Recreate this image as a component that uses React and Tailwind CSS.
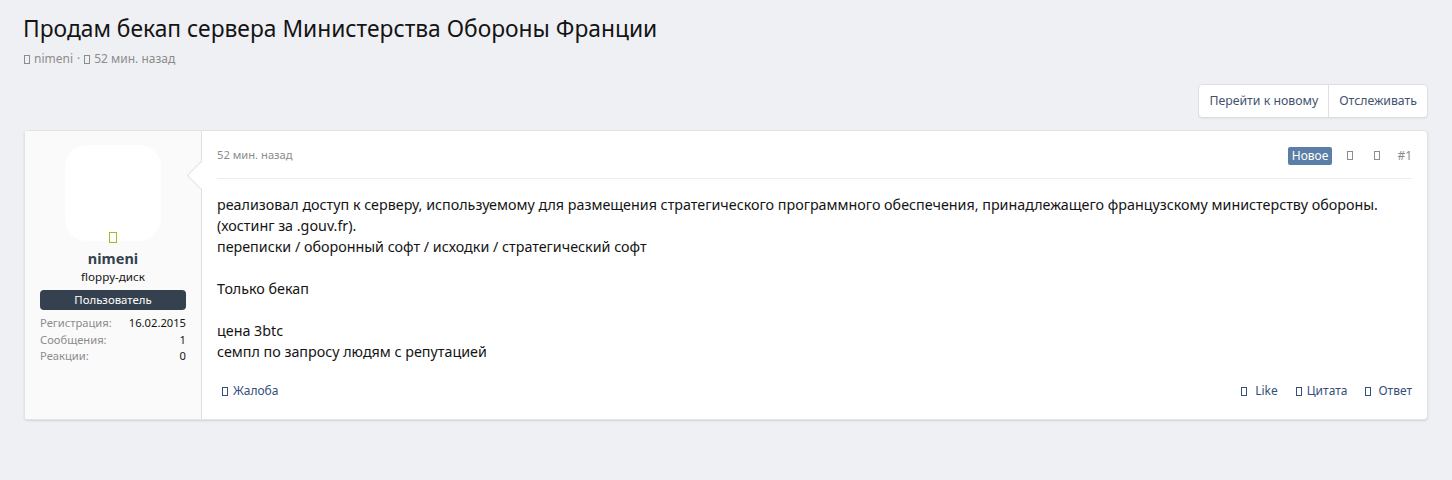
import React from 'react';

const Tofu = ({ className = '' }) => (
  <span className={`inline-block w-[6px] h-[9px] border border-current align-[-1px] ${className}`} />
);

const stats = [
  { label: 'Регистрация:', value: '16.02.2015' },
  { label: 'Сообщения:', value: '1' },
  { label: 'Реакции:', value: '0' },
];

const App = () => {
  return (
    <div className="min-h-[480px] bg-[#eff0f4] text-[#141414] font-['Noto_Sans',sans-serif] px-6 pt-[14px]">
      {/* Title */}
      <h1 className="text-[22.8px] leading-[30px] text-[#141414] -ml-[1px]">
        Продам бекап сервера Министерства Обороны Франции
      </h1>
      <div className="mt-[6px] text-[12px] text-[#8c8c8c] flex items-center gap-1">
        <Tofu /> <span>nimeni</span> <span>·</span> <Tofu /> <span>52 мин. назад</span>
      </div>

      {/* Buttons */}
      <div className="flex justify-end mt-[16px]">
        <div className="flex bg-white border border-[#dfdfdf] rounded-[4px] shadow-[0_1px_1px_rgba(0,0,0,0.05)] text-[12.3px] text-[#3f5370]">
          <button className="px-[10px] h-[32px] border-r border-[#dfdfdf]">Перейти к новому</button>
          <button className="px-[10px] h-[32px]">Отслеживать</button>
        </div>
      </div>

      {/* Post card */}
      <div className="mt-[12px] flex bg-white border border-[#e4e4e4] rounded-[4px] shadow-[0_1px_2px_rgba(0,0,0,0.12)]">
        {/* User panel */}
        <div className="relative w-[177px] shrink-0 bg-[#fafafa] border-r border-[#e0e0e0] px-[15px] pt-[14px] pb-4 flex flex-col items-center">
          <div className="w-[96px] h-[96px] rounded-[22px] bg-white" />
          <div className="-mt-[9px] h-[11px] flex text-[#9bbf20]">
            <Tofu className="w-[8px] h-[11px]" />
          </div>
          <div className="mt-[5px] text-[14.5px] font-bold text-[#36414f] leading-[20px]">nimeni</div>
          <div className="mt-[1px] text-[11.6px] text-[#141414] leading-4">floppy-диск</div>
          <div className="mt-[5px] w-full h-[20px] rounded-[4px] bg-[#36414f] text-white text-[11.4px] flex items-center justify-center">
            Пользователь
          </div>
          <div className="mt-[5px] w-full text-[11.2px] leading-[16.5px]">
            {stats.map((s) => (
              <div key={s.label} className="flex justify-between">
                <span className="text-[#8c8c8c]">{s.label}</span>
                <span className="text-[#141414]">{s.value}</span>
              </div>
            ))}
          </div>
          {/* arrow */}
          <div className="absolute right-[-1px] top-[30px] w-[15px] h-[30px] overflow-hidden">
            <div className="absolute left-[4px] top-[4px] w-[21px] h-[21px] rotate-45 bg-white border border-[#e0e0e0]" />
          </div>
        </div>

        {/* Message */}
        <div className="flex-1 px-[15px] pt-[15px] pb-[19px] flex flex-col">
          <div className="flex items-center justify-between h-[19px] text-[11.2px] text-[#8c8c8c]">
            <span>52 мин. назад</span>
            <div className="flex items-center text-[12px]">
              <span className="bg-[#5b7ea6] text-white px-[4px] h-[18px] leading-[18px] rounded-[2px]">Новое</span>
              <span className="ml-[15px] flex"><Tofu /></span>
              <span className="ml-[21px] flex"><Tofu /></span>
              <span className="ml-[17px]">#1</span>
            </div>
          </div>
          <div className="mt-[13px] border-t border-[#ececec]" />
          <div className="mt-[15px] text-[14.3px] leading-[21px] text-[#141414]">
            реализовал доступ к серверу, используемому для размещения стратегического программного обеспечения, принадлежащего французскому министерству обороны.
            <br />(хостинг за .gouv.fr).
            <br />переписки / оборонный софт / исходки / стратегический софт
            <br />
            <br />Только бекап
            <br />
            <br />цена 3btc
            <br />семпл по запросу людям с репутацией
          </div>
          <div className="mt-[20px] flex justify-between text-[12px] text-[#34507a]">
            <span className="pl-[5px] flex items-center gap-[5px]"><Tofu />Жалоба</span>
            <div className="flex items-center gap-[18px]">
              <span className="flex items-center gap-[8px]"><Tofu />Like</span>
              <span className="flex items-center gap-[5px]"><Tofu />Цитата</span>
              <span className="flex items-center gap-[7px]"><Tofu />Ответ</span>
            </div>
          </div>
        </div>
      </div>
    </div>
  );
};

export default App;
